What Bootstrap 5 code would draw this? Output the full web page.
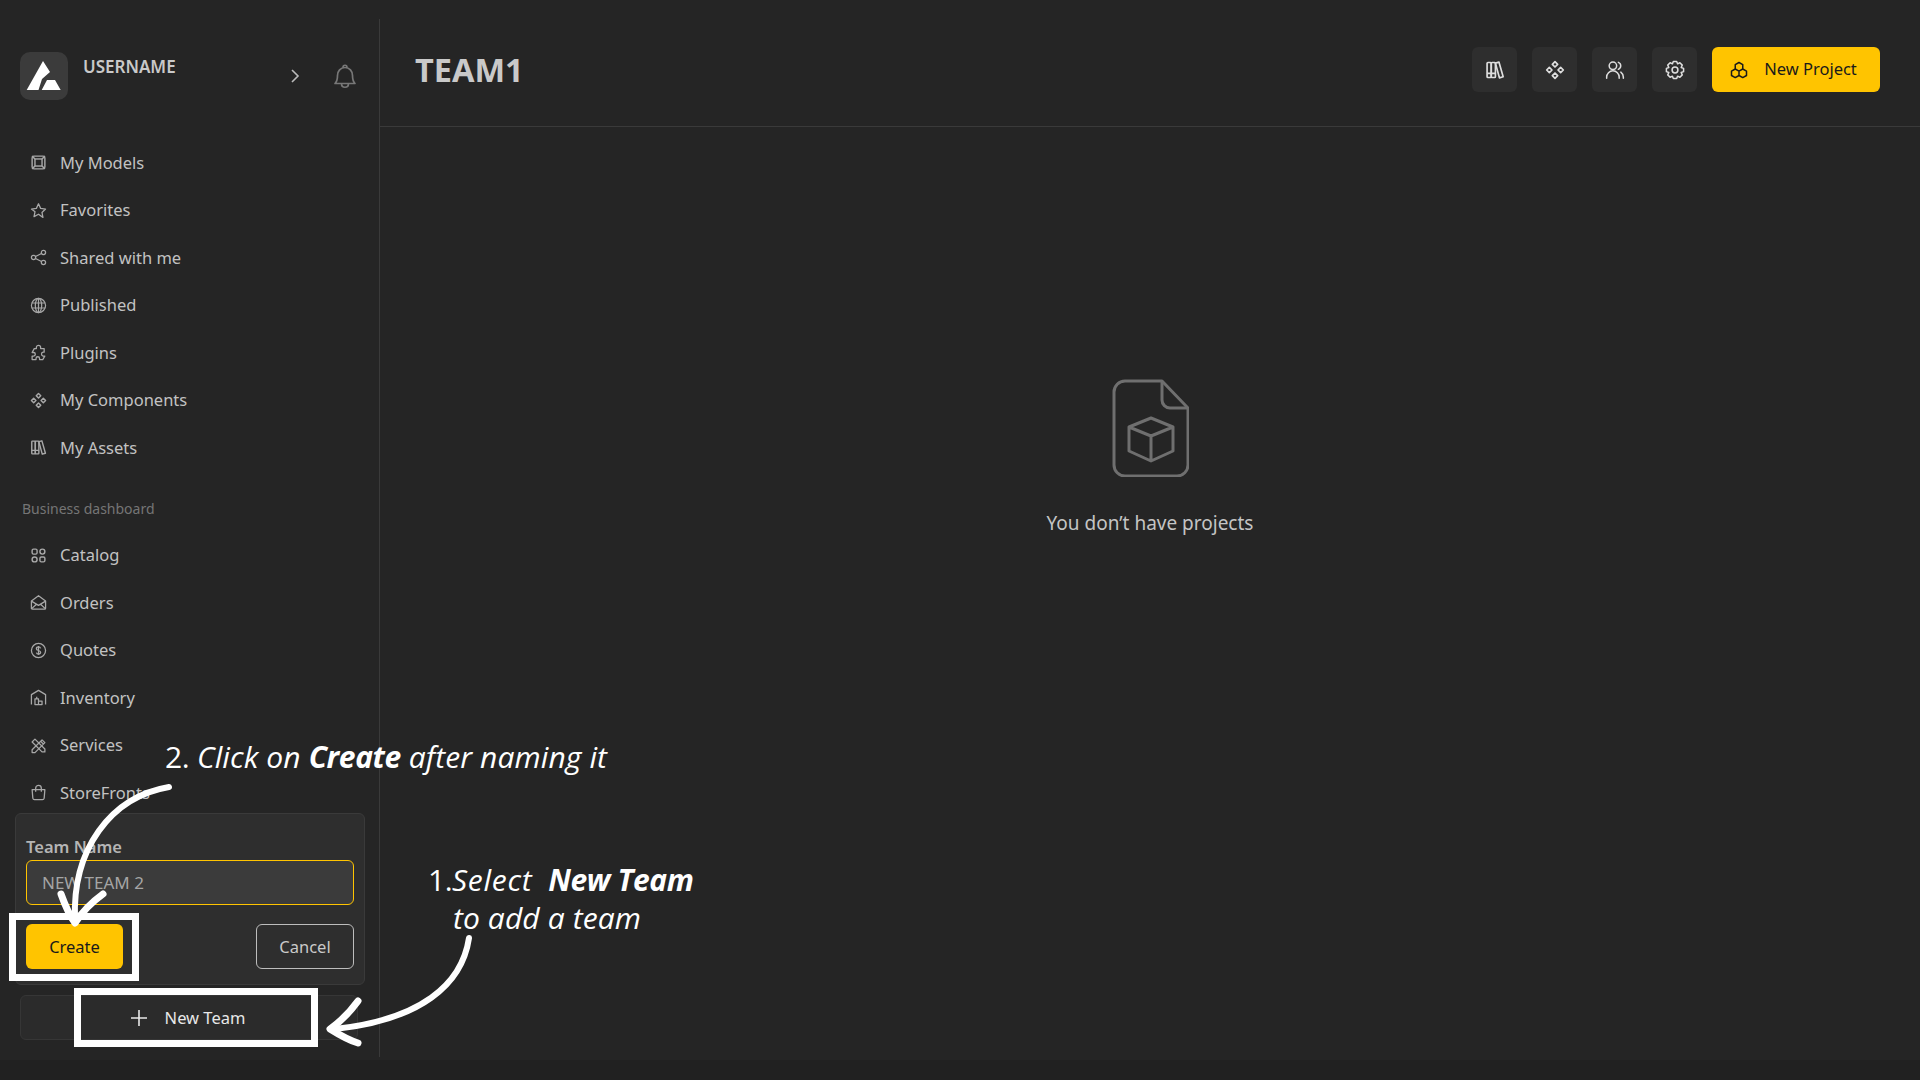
<!DOCTYPE html>
<html lang="en">
<head>
<meta charset="utf-8">
<title>TEAM1</title>
<link href="https://cdn.jsdelivr.net/npm/bootstrap@5.3.0/dist/css/bootstrap.min.css" rel="stylesheet">
<style>
html,body{height:1080px;overflow:hidden}
body{background:#252525;color:#c9c9c9;font-family:"Noto Sans","Open Sans","Liberation Sans",sans-serif;font-size:16.5px;position:relative}
.shell{height:1060px}
.bottom-band{height:20px;background:#212121}
.side{width:380px;flex:none;margin-top:19px;height:1038px;border-right:1px solid #3a3a3a;padding:33px 14px 17px 15px}
.side-head{height:48px;margin:0 0 39px 5px}
.logo-box{width:48px;height:48px;border-radius:10px;background:#3b3b3b;flex:none}
.uname{margin:4px 0 0 15px;font-weight:600;font-size:17px;line-height:22px;color:#c9c9c9;flex:1}
.side-ico{color:#bbb}
.bell{margin:0 8px 0 33px;color:#777}
.nav-row{height:47.5px;padding-left:15px;gap:13px;color:#c2c2c2;text-decoration:none;line-height:20px}
.nav-row svg{width:17px;height:17px;flex:none;color:#a8a8a8}
.side-label{font-size:14px;line-height:22px;color:#757575;margin:26.5px 0 11.5px 7px}
.team-panel{background:#2e2e2e;border:1px solid #3a3a3a;border-radius:6px;height:172px;margin-top:-3.5px;padding:22px 10px 0}
.team-label{font-weight:600;line-height:22px;color:#b5b5b5;margin-bottom:2px}
.team-input.form-control{height:45px;background:#3b3b3b;border:1px solid #ffc400;border-radius:6px;color:#a5a5a5;font-size:17px;padding:0 15px;box-shadow:none}
.team-actions{margin-top:19px}
.btn-amber.btn{background:#ffc400;border:0;color:#1a1a1a;border-radius:6px;height:45px;font-size:16.5px}
.btn-create{width:97px;padding:1px 0 0}
.btn-ghost.btn{width:98px;height:45px;background:transparent;border:1px solid #bdbdbd;color:#c9c9c9;border-radius:6px;font-size:16.5px;padding:1px 0 0}
.new-team.btn{height:45px;width:338px;margin:10px 0 0 5px;background:#2b2b2b;border:1px solid #363636;border-radius:6px;color:#e8e8e8;font-size:16.5px;gap:17px;padding:0 3px 0 0}
.new-team-text{padding-top:2px}
.main-head{height:127px;border-bottom:1px solid #3a3a3a;padding:47px 40px 0 35px;gap:15px}
.page-title{font-size:32.5px;font-weight:700;line-height:46px;color:#c9c9c9;margin:0 auto 0 0}
.tool-btn.btn{width:45px;height:45px;padding:0;background:#2e2e2e;border:0;border-radius:6px;color:#dedede}
.tool-btn svg{width:20px;height:20px}
.btn-project{width:168px;gap:16px;padding:0 5px 0 0}
.empty{padding-top:252px}
.empty svg{width:77px;height:98px}
.empty p{margin:33px 0 0;font-size:19px;line-height:26px;color:#c4c4c4}
.overlay{position:absolute;inset:0;pointer-events:none}
.frame{position:absolute;border:7px solid #fff}
.note{position:absolute;font-family:"Open Sans","Noto Sans",sans-serif;color:#fff;font-size:30px;line-height:38px;white-space:nowrap;font-style:italic;font-weight:400;letter-spacing:.1px}
.note b{font-weight:700;letter-spacing:-.4px}
.note .num{font-style:normal;letter-spacing:-.5px}
.note-gap{margin-left:8px}
.note-wide{letter-spacing:.7px}
.arrows{position:absolute;left:0;top:0}
</style>
</head>
<body>
<svg width="0" height="0" style="position:absolute" aria-hidden="true">
<defs>
<symbol id="i-model" viewBox="0 0 24 24" fill="none" stroke="currentColor" stroke-width="2"><rect x="3" y="3" width="18" height="18" rx="2.5"/><rect x="7" y="7" width="10" height="10"/><path d="M3 3l4 4M21 3l-4 4M3 21l4-4M21 21l-4-4"/></symbol>
<symbol id="i-star" viewBox="0 0 24 24" fill="none" stroke="currentColor" stroke-width="1.8" stroke-linejoin="round"><path d="M12 2.5l3 6.5 7 .9-5.1 4.8 1.4 7L12 17.3l-6.3 3.4 1.4-7L2 9.9 9 9z"/></symbol>
<symbol id="i-share" viewBox="0 0 24 24" fill="none" stroke="currentColor" stroke-width="1.8"><circle cx="5" cy="12" r="3"/><circle cx="19" cy="5" r="3"/><circle cx="19" cy="19" r="3"/><path d="M7.8 10.6l8.4-4.2M7.8 13.4l8.4 4.2"/></symbol>
<symbol id="i-globe" viewBox="0 0 24 24" fill="none" stroke="currentColor" stroke-width="1.7"><circle cx="12" cy="12" r="10"/><ellipse cx="12" cy="12" rx="4.5" ry="10"/><path d="M2.5 8.5h19M2.5 15.5h19M12 2v20"/></symbol>
<symbol id="i-puzzle" viewBox="0 0 24 24" fill="none" stroke="currentColor" stroke-width="1.8" stroke-linejoin="round"><path d="M9 6.5V5a3 3 0 016 0v1.5h5v5h-1.5a2.8 2.8 0 000 5.5H21l-3 5h-4.5v-1.5a2.5 2.5 0 00-5 0V22H3v-5h2a2.5 2.5 0 000-5H3l3-5.500z"/></symbol>
<symbol id="i-comp" viewBox="0 0 24 24" fill="none" stroke="currentColor" stroke-width="2" stroke-linejoin="round"><path d="M12 2l3.200 3.200L12 8.400 8.800 5.200zM12 15.600l3.200 3.200L12 22l-3.200-3.200zM5.200 8.800L8.400 12l-3.200 3.200L2 12zM18.800 8.800L22 12l-3.200 3.200L15.600 12z"/></symbol>
<symbol id="i-books" viewBox="0 0 24 24" fill="none" stroke="currentColor" stroke-width="2" stroke-linejoin="round"><rect x="2.500" y="3" width="5" height="18" rx="1"/><rect x="7.500" y="3" width="5" height="18" rx="1"/><path d="M12.500 3.800l4.300-1.200 5 17.500-4.500 1.300zM2.500 16h10"/></symbol>
<symbol id="i-grid" viewBox="0 0 24 24" fill="none" stroke="currentColor" stroke-width="2"><rect x="3" y="3" width="7" height="7" rx="2"/><circle cx="17.500" cy="6.500" r="3.500"/><circle cx="6.500" cy="17.500" r="3.500"/><rect x="14" y="14" width="7" height="7" rx="2"/></symbol>
<symbol id="i-mail" viewBox="0 0 24 24" fill="none" stroke="currentColor" stroke-width="1.800" stroke-linejoin="round"><path d="M2 10l10-7.500L22 10v10a1.500 1.500 0 01-1.500 1.500h-17A1.500 1.500 0 012 20z"/><path d="M2 10l10 6 10-6M2 21l7.500-7M22 21l-7.500-7"/></symbol>
<symbol id="i-dollar" viewBox="0 0 24 24" fill="none" stroke="currentColor" stroke-width="1.800"><circle cx="12" cy="12" r="10"/><path d="M15 9c-.500-1.300-1.600-2-3-2-1.700 0-3 .9-3 2.400 0 3.400 6 1.800 6 5.200 0 1.500-1.300 2.400-3 2.400-1.400 0-2.600-.7-3-2M12 5.500v13"/></symbol>
<symbol id="i-store" viewBox="0 0 24 24" fill="none" stroke="currentColor" stroke-width="1.800" stroke-linejoin="round"><path d="M2 22V8l10-6 10 6v14"/><path d="M7 22v-8h5v8zM12 22v-5h5v5zM9.500 14v-3"/></symbol>
<symbol id="i-tools" viewBox="0 0 24 24" fill="none" stroke="currentColor" stroke-width="1.800" stroke-linejoin="round"><path d="M3 18l14-14 4 4-14 14H3zM15 6l4 4"/><path d="M3 7l4-4 14 14v4h-4z"/></symbol>
<symbol id="i-bag" viewBox="0 0 24 24" fill="none" stroke="currentColor" stroke-width="1.800" stroke-linejoin="round"><path d="M3 8h18l-1 12a2.500 2.500 0 01-2.500 2h-11A2.500 2.500 0 014 20zM8 11V6a4 4 0 018 0v5"/></symbol>
<symbol id="i-users" viewBox="0 0 24 24" fill="none" stroke="currentColor" stroke-width="1.800" stroke-linecap="round"><circle cx="9.500" cy="7" r="4.500"/><path d="M2 22v-1.500a7.500 7.500 0 0115 0V22M16 2.800a4.500 4.500 0 010 8.400M19 14.500a7.500 7.500 0 013 6V22"/></symbol>
<symbol id="i-gear" viewBox="0 0 24 24" fill="none" stroke="currentColor" stroke-width="1.800" stroke-linejoin="round"><circle cx="12" cy="12" r="3.500"/><path d="M10 1.700h4l1.060 2.910 2.810-1.310 2.830 2.830-1.310 2.810L22.300 10v4l-2.910 1.060 1.310 2.810-2.830 2.830-2.810-1.310L14 22.300h-4l-1.060-2.910-2.810 1.310-2.830-2.830 1.310-2.810L1.700 14v-4l2.910-1.060L3.300 6.130 6.130 3.300l2.810 1.310z"/></symbol>
<symbol id="i-hex" viewBox="0 0 24 24" fill="none" stroke="currentColor" stroke-width="2" stroke-linejoin="round"><path d="M12 2l5 2.900v5.800L12 13.500l-5-2.800V4.900zM7 10.700l5 2.800v5.800l-5 2.800-5-2.800v-5.800zM17 10.700l5 2.800v5.800l-5 2.800-5-2.800v-5.800z"/></symbol>
</defs>
</svg>

<div class="shell d-flex">
  <aside class="side d-flex flex-column">
    <div class="side-head d-flex align-items-center">
      <div class="logo-box">
        <svg width="48" height="48" viewBox="0 0 48 48"><path fill="#fff" d="M23 9l7 11-8 7-3.500 11H6.700zM27 28h8l5.700 10H21.700z"/></svg>
      </div>
      <div class="uname align-self-start">USERNAME</div>
      <svg class="side-ico" width="10" height="14" viewBox="0 0 10 14" fill="none" stroke="currentColor" stroke-width="1.600"><path d="M2 1l6 6-6 6"/></svg>
      <svg class="bell" width="24" height="26" viewBox="0 0 24 26" fill="none" stroke="currentColor" stroke-width="1.700" stroke-linejoin="round"><path d="M2 20.500c2-2 2.500-4 2.500-8 0-4.500 3-8 7.500-8s7.500 3.500 7.500 8c0 4 .5 6 2.500 8zM10 4.500c0-3 4-3 4 0M8.500 20.500c0 5 7 5 7 0"/></svg>
    </div>
    <nav class="d-flex flex-column">
      <a class="nav-row d-flex align-items-center" href="#"><svg><use href="#i-model"/></svg>My Models</a>
      <a class="nav-row d-flex align-items-center" href="#"><svg><use href="#i-star"/></svg>Favorites</a>
      <a class="nav-row d-flex align-items-center" href="#"><svg><use href="#i-share"/></svg>Shared with me</a>
      <a class="nav-row d-flex align-items-center" href="#"><svg><use href="#i-globe"/></svg>Published</a>
      <a class="nav-row d-flex align-items-center" href="#"><svg><use href="#i-puzzle"/></svg>Plugins</a>
      <a class="nav-row d-flex align-items-center" href="#"><svg><use href="#i-comp"/></svg>My Components</a>
      <a class="nav-row d-flex align-items-center" href="#"><svg><use href="#i-books"/></svg>My Assets</a>
    </nav>
    <div class="side-label">Business dashboard</div>
    <nav class="d-flex flex-column">
      <a class="nav-row d-flex align-items-center" href="#"><svg><use href="#i-grid"/></svg>Catalog</a>
      <a class="nav-row d-flex align-items-center" href="#"><svg><use href="#i-mail"/></svg>Orders</a>
      <a class="nav-row d-flex align-items-center" href="#"><svg><use href="#i-dollar"/></svg>Quotes</a>
      <a class="nav-row d-flex align-items-center" href="#"><svg><use href="#i-store"/></svg>Inventory</a>
      <a class="nav-row d-flex align-items-center" href="#"><svg><use href="#i-tools"/></svg>Services</a>
      <a class="nav-row d-flex align-items-center" href="#"><svg><use href="#i-bag"/></svg>StoreFronts</a>
    </nav>
    <div class="team-panel">
      <div class="team-label">Team Name</div>
      <input class="team-input form-control" type="text" value="NEW TEAM 2">
      <div class="team-actions d-flex justify-content-between">
        <button class="btn btn-amber btn-create" type="button">Create</button>
        <button class="btn btn-ghost" type="button">Cancel</button>
      </div>
    </div>
    <button class="btn new-team d-flex align-items-center justify-content-center" type="button">
      <svg width="18" height="18" viewBox="0 0 18 18" stroke="currentColor" stroke-width="1.600"><path d="M9 1v16M1 9h16"/></svg><span class="new-team-text">New Team</span>
    </button>
  </aside>
  <main class="flex-grow-1">
    <header class="main-head d-flex align-items-start">
      <h1 class="page-title">TEAM1</h1>
      <button class="btn tool-btn d-flex align-items-center justify-content-center" type="button" aria-label="Assets"><svg><use href="#i-books"/></svg></button>
      <button class="btn tool-btn d-flex align-items-center justify-content-center" type="button" aria-label="Components"><svg><use href="#i-comp"/></svg></button>
      <button class="btn tool-btn d-flex align-items-center justify-content-center" type="button" aria-label="Members"><svg><use href="#i-users"/></svg></button>
      <button class="btn tool-btn d-flex align-items-center justify-content-center" type="button" aria-label="Settings"><svg><use href="#i-gear"/></svg></button>
      <button class="btn btn-amber btn-project d-flex align-items-center justify-content-center" type="button"><svg width="18" height="18"><use href="#i-hex"/></svg>New Project</button>
    </header>
    <section class="empty d-flex flex-column align-items-center">
      <svg viewBox="0 0 77 98" fill="none" stroke="#6f6f6f" stroke-width="3" stroke-linejoin="round">
        <path d="M50 2H13A11 11 0 002 13v73a11 11 0 0011 11h52a11 11 0 0011-11V29z"/>
        <path d="M50 2v19a8 8 0 008 8h18"/>
        <path d="M39 39L17 48v24l22 10 22-10V48zM17 48l22 9 22-9M39 57v25"/>
      </svg>
      <p>You don’t have projects</p>
    </section>
  </main>
</div>
<div class="bottom-band"></div>

<div class="overlay">
  <div class="frame" style="left:9px;top:913px;width:130px;height:68px"></div>
  <div class="frame" style="left:74px;top:988px;width:244px;height:59px"></div>
  <svg class="arrows" width="1920" height="1080" fill="none" stroke="#fff" stroke-linecap="round" stroke-linejoin="round">
    <path d="M169 787C110 797 72 850 75 920" stroke-width="6"/>
    <path d="M61 894C66 908 70 916 75 923C82 912 92 902 103 894" stroke-width="7"/>
    <path d="M469 938C462 985 420 1020 335 1029" stroke-width="6"/>
    <path d="M358 1001C350 1012 340 1022 330 1029C338 1034 348 1040 358 1043" stroke-width="7"/>
  </svg>
  <div class="note" style="left:165px;top:738px"><span class="num">2.</span> Click on <b>Create</b> after naming it</div>
  <div class="note" style="left:428px;top:861px"><span class="num">1.</span><span class="note-wide">Select</span> <b class="note-gap">New Team</b></div>
  <div class="note" style="left:453px;top:899px">to add a team</div>
</div>
</body>
</html>
